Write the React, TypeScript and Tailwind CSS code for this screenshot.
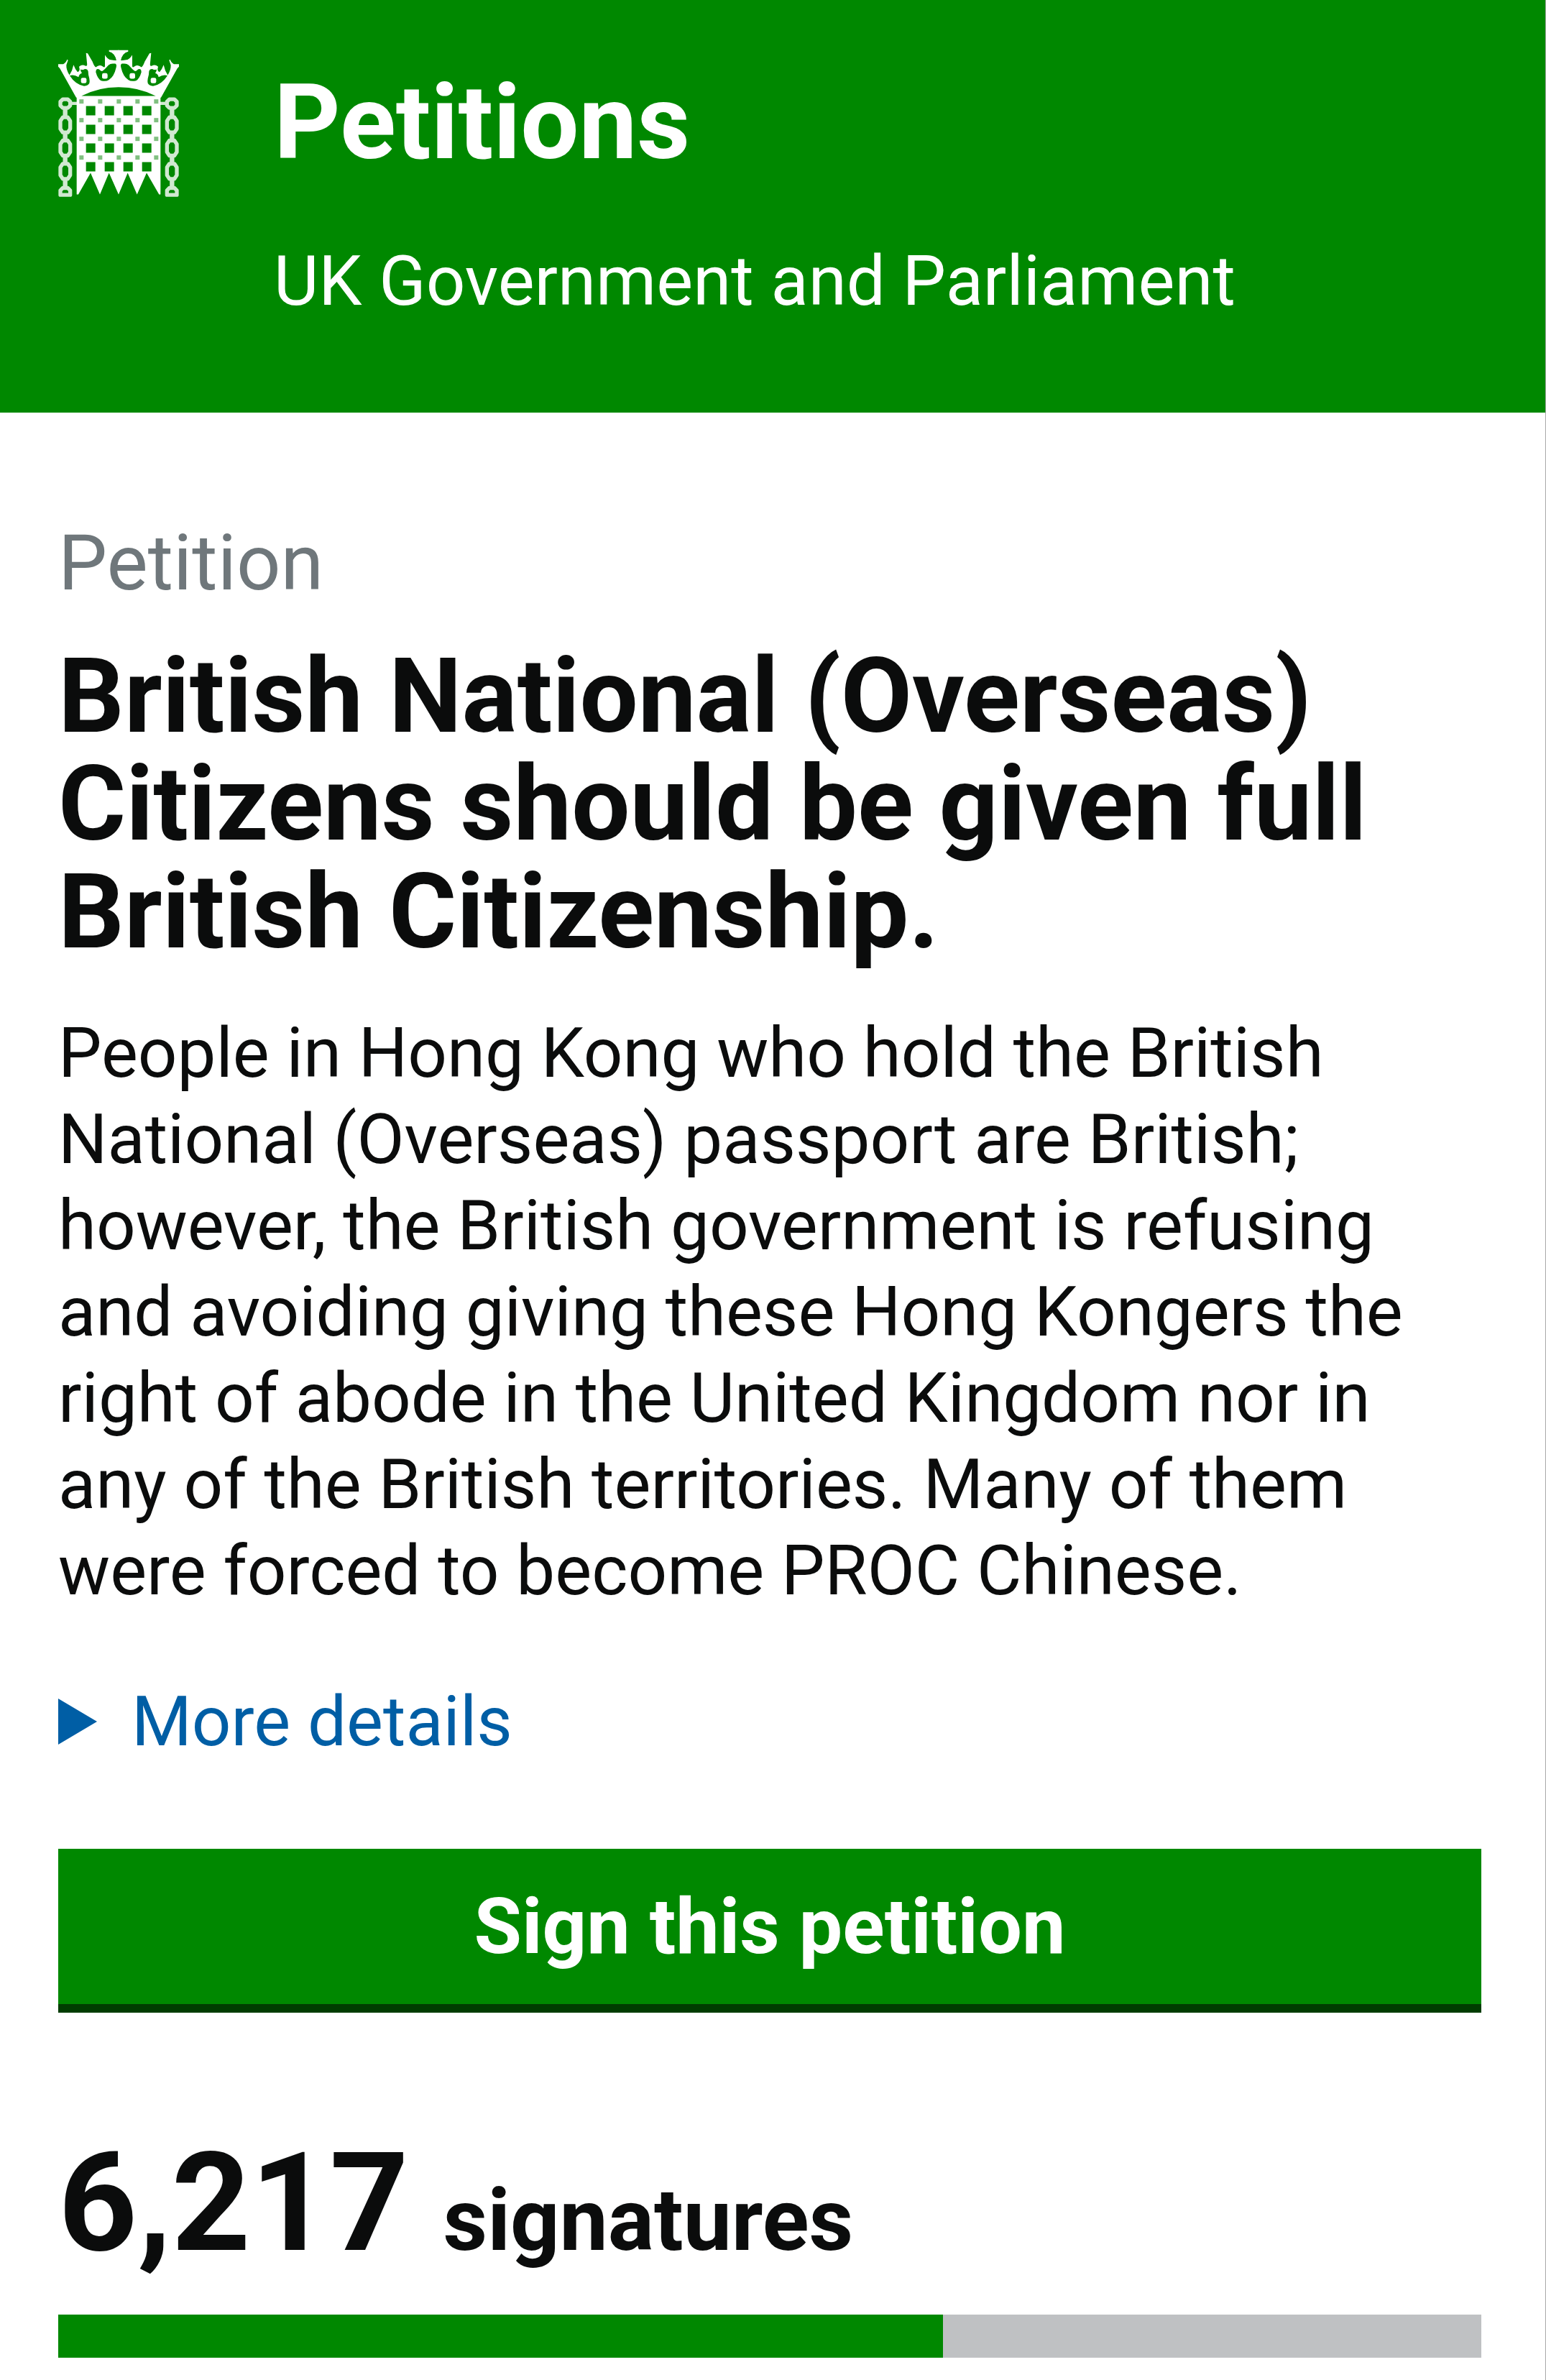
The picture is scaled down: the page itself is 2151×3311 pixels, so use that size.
const ROWS = [0, 1, 2, 3];
const COLS = [0, 1, 2, 3];
const RIVET_COLS = [0, 1, 2, 3, 4];

function Chain() {
  return (
    <g fill="none" stroke="#fff" opacity="0.82" strokeWidth="16" strokeLinejoin="round">
      <path d="M52 235H73L83 245V261L73 271H52L42 261V245Z" />
      <path d="M52 310H73L83 325V358L73 373H52L42 358V325Z" />
      <path d="M52 407H73L83 422V455L73 470H52L42 455V422Z" />
      <path d="M52 504H73L83 519V552L73 567H52L42 552V519Z" />
      <path d="M52 605H73L83 615V634H42V615Z" />
      <path d="M62 275V306M62 377V403M62 474V500M62 571V601" strokeWidth="19" />
      <path d="M86 252H112" strokeWidth="13" />
    </g>
  );
}

function CrownHalf() {
  return (
    <g>
      <path
        fill="#fff"
        d="M108 228L40 106L33 99V88H54Q66 82 70 69L74 72L67 92Q66 112 80 134Q92 116 97 91Q104 110 114 121Q126 118 120 99Q132 88 146 95Q156 99 153 82L149 42L156 43L176 78Q184 100 190 101Q204 88 218 97Q228 106 228 96V51Q238 68 252 71L276 74Q270 42 245 36V30H287V228Z"
      />
      <path
        fill="#008800"
        d="M81 136Q98 130 118 142Q120 130 132 126Q126 118 126 110Q136 114 142 109Q154 106 158 118Q158 134 163 148Q165 158 163 168Q158 178 141 180Q104 172 81 136Z"
      />
      <path
        fill="#008800"
        d="M190 122Q190 105 204 110Q212 120 219 116Q226 112 237 99Q246 86 268 84Q279 88 275 102Q266 142 244 154Q232 162 212 157Q198 150 190 122Z"
      />
      <path fill="#fff" d="M228 51Q238 68 252 71L278 73V86L254 86Q240 88 228 106Z" />
      <rect x="128" y="145" width="23" height="23" rx="7" fill="#fff" />
      <rect x="216" y="126" width="23" height="23" rx="7" fill="#fff" />
    </g>
  );
}

function Portcullis() {
  return (
    <svg viewBox="33 28 504 614" className="h-[205px] w-[168px] shrink-0" aria-hidden="true">
      <Chain />
      <g transform="translate(570 0) scale(-1 1)">
        <Chain />
      </g>
      <CrownHalf />
      <g transform="translate(570 0) scale(-1 1)">
        <CrownHalf />
      </g>
      <path fill="#008800" d="M130 221Q200 184 285 184T440 221Z" />
      <path
        fill="#fff"
        d="M110 225H460V632H454L402 542L362 632L323 542L285 632L245 542L207 632L168 542L117 632H110Z"
      />
      {ROWS.map((r) =>
        COLS.map((c) => (
          <rect key={`${r}-${c}`} x={149 + c * 78} y={263 + r * 78} width="39" height="39" fill="#008800" />
        )),
      )}
      {ROWS.map((r) =>
        RIVET_COLS.map((c) => (
          <rect key={`${r}-${c}`} x={121 + c * 78} y={235 + r * 78} width="18" height="18" fill="#80c080" />
        )),
      )}
    </svg>
  );
}

export default function App() {
  const progress = 62.17;
  return (
    <div className="border-r border-[#a8a8a8] bg-white font-[Roboto,sans-serif] text-[#0b0c0c]">
      <header className="flex items-start gap-[132px] bg-[#008800] px-[81px] pt-[69px] pb-[123px] text-white">
        <Portcullis />
        <div className="pt-[27px]">
          <a href="#" className="block text-[144px] leading-[150px] font-bold">
            Petitions
          </a>
          <p className="mt-[85px] text-[96px] leading-[120px]">UK Government and Parliament</p>
        </div>
      </header>

      <main className="pt-[149px] pr-[89px] pb-[31px] pl-[81px]">
        <h1>
          <span className="block text-[108px] leading-[120px] text-[#6f777b]">Petition</span>
          <span className="mt-[51px] block text-[144px] leading-[150px] font-bold">
            British National (Overseas) Citizens should be given full British Citizenship.
          </span>
        </h1>

        <p className="mt-[61px] text-[96px] leading-[120px]">
          People in Hong Kong who hold the British National (Overseas) passport are British; however, the British
          government is refusing and avoiding giving these Hong Kongers the right of abode in the United Kingdom nor in
          any of the British territories. Many of them were forced to become PROC Chinese.
        </p>

        <details className="mt-[90px] text-[96px] leading-[120px]">
          <summary className="flex cursor-pointer list-none items-center gap-[48px] text-[#005ea5]">
            <svg viewBox="0 0 54 64" className="h-[64px] w-[54px]" fill="currentColor" aria-hidden="true">
              <path d="M0 0L54 32L0 64Z" />
            </svg>
            <span>More details</span>
          </summary>
        </details>

        <button
          type="button"
          className="mt-[117px] block h-[228px] w-full border-b-12 border-[#003c00] bg-[#008800] text-[108px] leading-[120px] font-bold text-white"
        >
          Sign this petition
        </button>

        <p className="mt-[169px] text-[192px] leading-[192px] font-bold">
          6,217 <span className="text-[120px] leading-[120px]">signatures</span>
        </p>

        <div
          role="progressbar"
          aria-label="Signatures"
          aria-valuenow={progress}
          aria-valuemin={0}
          aria-valuemax={100}
          className="mt-[59px] h-[60px] bg-[#bfc1c3]"
        >
          <div className="h-full bg-[#008800]" style={{ width: `${progress}%` }} />
        </div>
      </main>
    </div>
  );
}
